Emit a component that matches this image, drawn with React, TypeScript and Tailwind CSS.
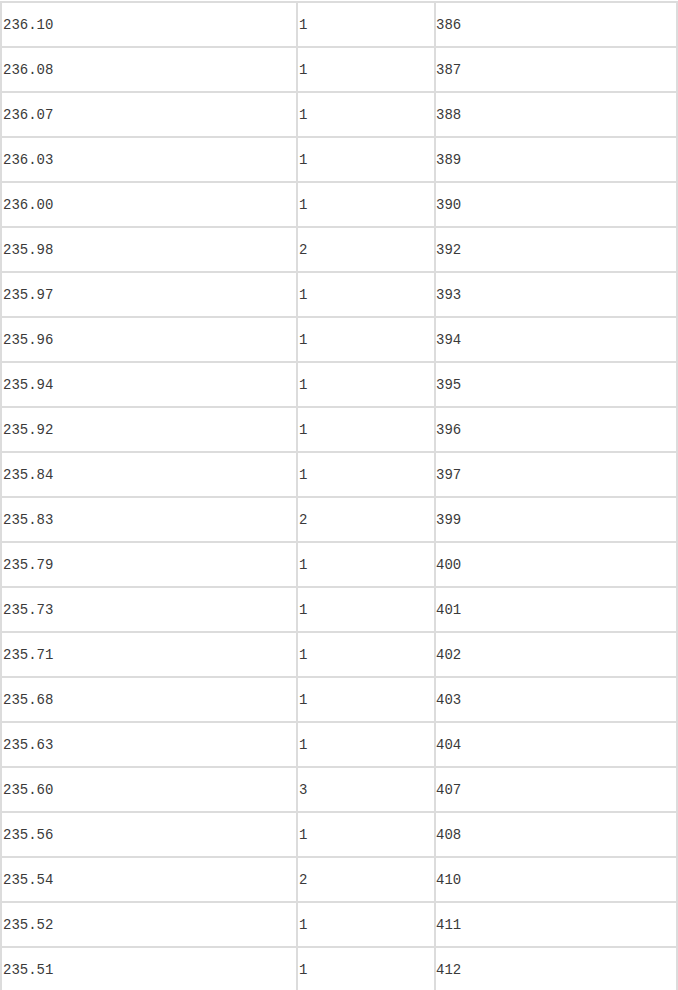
import React from 'react';

const rows: [string, string, string][] = [
  ['236.10', '1', '386'],
  ['236.08', '1', '387'],
  ['236.07', '1', '388'],
  ['236.03', '1', '389'],
  ['236.00', '1', '390'],
  ['235.98', '2', '392'],
  ['235.97', '1', '393'],
  ['235.96', '1', '394'],
  ['235.94', '1', '395'],
  ['235.92', '1', '396'],
  ['235.84', '1', '397'],
  ['235.83', '2', '399'],
  ['235.79', '1', '400'],
  ['235.73', '1', '401'],
  ['235.71', '1', '402'],
  ['235.68', '1', '403'],
  ['235.63', '1', '404'],
  ['235.60', '3', '407'],
  ['235.56', '1', '408'],
  ['235.54', '2', '410'],
  ['235.52', '1', '411'],
  ['235.51', '1', '412'],
];

const App: React.FC = () => {
  return (
    <div className="bg-white pt-px w-[678px] min-h-[990px]">
      <div className="border-r-2 border-[#dcdcdc] text-[14px] text-[#3a3a3a] font-['Liberation_Mono',monospace]">
        {rows.map(([price, qty, total]) => (
          <div key={total} className="grid grid-cols-[296px_138px_1fr] h-[45px] border-t-2 border-[#dcdcdc]">
            <div className="border-l-2 border-[#dcdcdc] pl-px pt-px flex items-center">{price}</div>
            <div className="border-l-2 border-[#dcdcdc] pl-px pt-px flex items-center">{qty}</div>
            <div className="border-l-2 border-[#dcdcdc] pt-px flex items-center">{total}</div>
          </div>
        ))}
      </div>
    </div>
  );
};

export default App;
